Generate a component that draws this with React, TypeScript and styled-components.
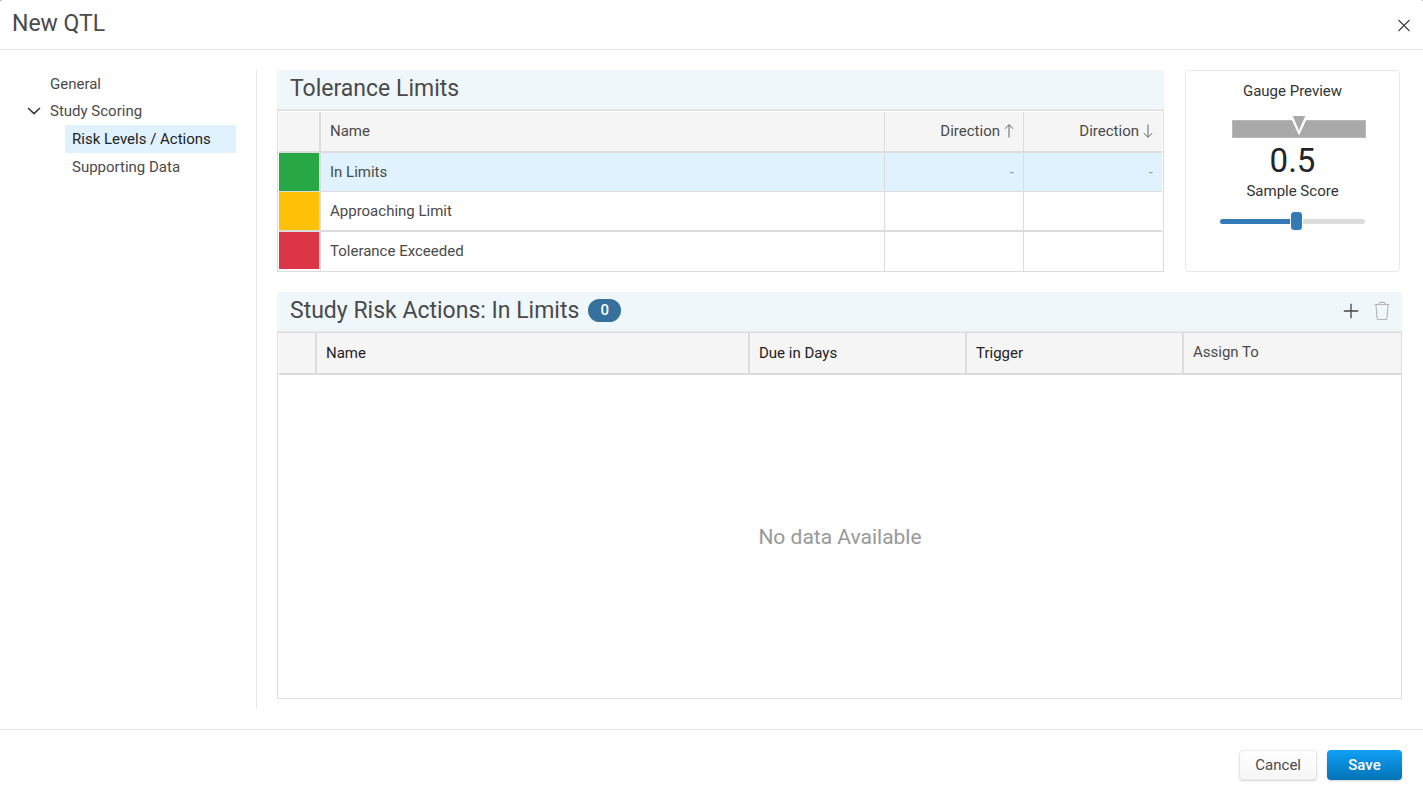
import React, { useState } from "react";
import styled, { createGlobalStyle, css } from "styled-components";

const line = "#dcdcdc";
const softLine = "#e9e9e9";

const GlobalStyle = createGlobalStyle`
  *, *::before, *::after { box-sizing: border-box; }
  body {
    margin: 0;
    background: #8a8a8a;
    color: #4a4a4a;
    font: 400 15px/20px Roboto, "Liberation Sans", sans-serif;
  }
  button, input { font: inherit; }
`;

const Dialog = styled.div`
  display: flex;
  flex-direction: column;
  min-height: 100vh;
  background: #fff;
  border-radius: 2px 2px 0 0;
`;

const DialogHeader = styled.header`
  display: flex;
  align-items: center;
  justify-content: space-between;
  height: 50px;
  padding: 0 12px;
  border-bottom: 1px solid ${softLine};
`;

const DialogTitle = styled.h1`
  margin: 0;
  padding-bottom: 2px;
  font-size: 23px;
  line-height: 28px;
  font-weight: 400;
`;

const IconButton = styled.button`
  display: inline-flex;
  padding: 0;
  border: 0;
  background: none;
  color: #444;
  cursor: pointer;

  &:disabled {
    color: #b5b5b5;
    cursor: default;
  }
`;

const DialogBody = styled.div`
  display: flex;
  flex: 1;
`;

const Sidebar = styled.nav`
  flex: 0 0 257px;
  margin: 20px 0;
  padding-right: 20px;
  border-right: 1px solid ${softLine};
`;

const Tree = styled.ul`
  margin: 0;
  padding: 0;
  list-style: none;

  & & {
    padding-top: 1px;
  }
`;

const TreeLink = styled.a<{ $nested?: boolean; $active?: boolean }>`
  display: flex;
  align-items: center;
  height: ${(p) => (p.$active ? 28 : 27)}px;
  margin-left: ${(p) => (p.$nested ? 65 : 27)}px;
  padding-left: ${(p) => (p.$nested ? 7 : 0)}px;
  color: ${(p) => (p.$active ? "#222" : "#4a4a4a")};
  background: ${(p) => (p.$active ? "#dff2fe" : "transparent")};
  text-decoration: none;
`;

const TreeToggle = styled.span`
  display: inline-flex;
  width: 23px;
`;

const Main = styled.main`
  display: flex;
  flex: 1;
  flex-direction: column;
  gap: 20px;
  min-width: 0;
  padding: 20px 21px 30px 20px;
`;

const TopRow = styled.div`
  display: flex;
  gap: 21px;
  padding-right: 2px;
`;

const Panel = styled.section`
  display: flex;
  flex: 1;
  flex-direction: column;
  min-width: 0;
`;

const PanelHeader = styled.div`
  display: flex;
  align-items: center;
  height: 40px;
  padding: 0 12px 2px 13px;
  background: #eff7fb;
  border-bottom: 1px solid ${softLine};
  border-radius: 4px 4px 0 0;
`;

const PanelTitle = styled.h2`
  margin: 0;
  font-size: 23px;
  line-height: 28px;
  font-weight: 400;
`;

const Badge = styled.span`
  width: 33px;
  margin-left: 9px;
  border-radius: 12px;
  background: #36709c;
  color: #fff;
  font-weight: 500;
  line-height: 23px;
  text-align: center;
`;

const Actions = styled.div`
  display: flex;
  align-items: center;
  gap: 15px;
  margin-left: auto;
`;

const TableFrame = styled.div<{ $flush?: boolean }>`
  display: flex;
  flex: 1;
  flex-direction: column;
  padding: ${(p) => (p.$flush ? "0 0 0 1px" : "1px 1px 0")};
  border: 1px solid ${line};
`;

const Table = styled.table`
  width: 100%;
  table-layout: fixed;
  border-collapse: separate;
  border-spacing: 0;
`;

const Col = styled.col<{ $width?: string }>`
  width: ${(p) => p.$width ?? "auto"};
`;

const cell = css<{ $divider?: number; $right?: boolean }>`
  padding: 0 9px;
  border-right: ${(p) => p.$divider ?? 0}px solid ${line};
  text-align: ${(p) => (p.$right ? "right" : "left")};
  font-weight: 400;
  white-space: nowrap;
`;

const HeadCell = styled.th<{ $divider?: number; $right?: boolean; $dark?: boolean }>`
  ${cell}
  height: 41px;
  padding-bottom: ${(p) => (p.$dark ? 0 : 2)}px;
  border-bottom: 2px solid ${line};
  background: #f5f5f5;
  color: ${(p) => (p.$dark ? "#222" : "#4a4a4a")};
`;

const TallHeadCell = styled(HeadCell)`
  height: 42px;
`;

const Cell = styled.td<{ $divider?: number; $right?: boolean }>`
  ${cell}
`;

const SwatchCell = styled(Cell)<{ $color: string }>`
  background: ${(p) => p.$color};
`;

const BodyRow = styled.tr<{ $selected?: boolean }>`
  height: 39px;
  background: ${(p) => (p.$selected ? "#dff2fe" : "#fff")};

  ${Cell} {
    border-bottom: 1px solid ${line};
  }
  &:nth-child(2) {
    height: 40px;
  }
  &:nth-child(2) ${Cell} {
    border-bottom-width: 2px;
  }
  &:last-child ${Cell} {
    padding-bottom: 2px;
    border-bottom: 0;
  }
  &:last-child ${SwatchCell} {
    border-bottom: 2px solid #fff;
  }
`;

const Muted = styled.span`
  color: #999;
`;

const DirectionLabel = styled.span`
  display: inline-flex;
  align-items: center;
  gap: 4px;
`;

const EmptyState = styled.div`
  display: flex;
  flex: 1;
  align-items: center;
  justify-content: center;
  color: #999;
  font-size: 21px;
  line-height: 28px;
`;

const GaugeCard = styled.aside`
  display: flex;
  flex: 0 0 215px;
  flex-direction: column;
  align-items: center;
  padding: 10px 0;
  border: 1px solid ${softLine};
  border-radius: 4px;
  color: #333;
`;

const GaugeDrawing = styled.svg`
  display: block;
  margin: 14px 0 2px 13px;
`;

const Score = styled.output`
  color: #212529;
  font-size: 33px;
  line-height: 40px;
`;

const Slider = styled.input<{ $percent: number }>`
  width: 145px;
  height: 20px;
  margin: 10px 0 0;
  appearance: none;
  background: transparent;

  &::-webkit-slider-runnable-track {
    height: 5px;
    border-radius: 3px;
    background: linear-gradient(
      to right,
      #337ab7 ${(p) => p.$percent}%,
      #dcdcdc ${(p) => p.$percent}%
    );
  }
  &::-webkit-slider-thumb {
    appearance: none;
    width: 13px;
    height: 20px;
    margin-top: -8px;
    border: 1px solid #fff;
    border-radius: 4px;
    background: #337ab7;
  }
`;

const DialogFooter = styled.footer`
  display: flex;
  justify-content: flex-end;
  gap: 10px;
  height: 69px;
  padding: 20px 21px 0;
  border-top: 1px solid ${softLine};
`;

const Button = styled.button<{ $primary?: boolean }>`
  min-width: 75px;
  height: 30px;
  padding: 0 15px;
  border: ${(p) => (p.$primary ? "0" : `1px solid ${softLine}`)};
  border-radius: 4px;
  background: ${(p) =>
    p.$primary
      ? "linear-gradient(#11a0f8, #0272b4)"
      : "linear-gradient(#fff, #f6f6f6)"};
  box-shadow: 0 1px 2px rgba(0, 0, 0, 0.18);
  color: ${(p) => (p.$primary ? "#fff" : "#4a4a4a")};
  font-weight: ${(p) => (p.$primary ? 500 : 400)};
  cursor: pointer;
`;

const limits = [
  { name: "In Limits", color: "#28a745", value: "-" },
  { name: "Approaching Limit", color: "#ffc107", value: "" },
  { name: "Tolerance Exceeded", color: "#dc3545", value: "" },
];

const CloseIcon = () => (
  <svg width="14" height="14" viewBox="0 0 14 14" fill="none" stroke="currentColor" strokeWidth="1.2">
    <path d="M1.5 2l11 11M12.5 2l-11 11" />
  </svg>
);

const ChevronIcon = () => (
  <svg width="14" height="10" viewBox="0 0 14 10" fill="none" stroke="#333" strokeWidth="1.5">
    <path d="M1 2l6 5.6L13 2" />
  </svg>
);

const ArrowIcon = ({ down }: { down?: boolean }) => (
  <svg width="10" height="14" viewBox="0 0 10 14" fill="none" stroke="#666" strokeWidth="1">
    <path d={down ? "M5 .5v12.7M.8 9.2l4.2 4 4.2-4" : "M5 13.5V.8M.8 4.8l4.2-4 4.2 4"} />
  </svg>
);

const PlusIcon = () => (
  <svg width="16" height="16" viewBox="0 0 16 16" fill="none" stroke="currentColor" strokeWidth="1.3">
    <path d="M8 .8v14.4M.8 8h14.4" />
  </svg>
);

const TrashIcon = () => (
  <svg width="16" height="20" viewBox="0 0 16 20" fill="none" stroke="currentColor" strokeWidth="1.1">
    <path d="M.5 3.5h15M4.8 3.3C5 1.9 5.8 1.4 6.8 1.4h2.4c1 0 1.8.5 2 1.9M2 3.7l1 13.4c.1 1 .6 1.4 1.4 1.4h7.2c.8 0 1.3-.4 1.4-1.4l1-13.4" />
  </svg>
);

const Gauge = () => (
  <GaugeDrawing width="134" height="24" viewBox="0 0 134 24" role="img" aria-label="Gauge">
    <rect x="0.5" y="5.5" width="133" height="17" fill="#a9a9a9" stroke="#b8b8b8" />
    <path d="M58 1h18L67 20.5z" fill="#fff" />
    <path d="M60.8 1h12.4L67 15.5z" fill="#a9a9a9" />
  </GaugeDrawing>
);

export default function App() {
  const [score, setScore] = useState(0.53);

  return (
    <>
      <GlobalStyle />
      <Dialog role="dialog" aria-labelledby="dialog-title">
        <DialogHeader>
          <DialogTitle id="dialog-title">New QTL</DialogTitle>
          <IconButton type="button" aria-label="Close">
            <CloseIcon />
          </IconButton>
        </DialogHeader>

        <DialogBody>
          <Sidebar aria-label="Sections">
            <Tree>
              <li>
                <TreeLink href="#general">
                  <TreeToggle />
                  General
                </TreeLink>
              </li>
              <li>
                <TreeLink href="#scoring">
                  <TreeToggle>
                    <ChevronIcon />
                  </TreeToggle>
                  Study Scoring
                </TreeLink>
                <Tree>
                  <li>
                    <TreeLink href="#levels" $nested $active aria-current="page">
                      Risk Levels / Actions
                    </TreeLink>
                  </li>
                  <li>
                    <TreeLink href="#supporting" $nested>
                      Supporting Data
                    </TreeLink>
                  </li>
                </Tree>
              </li>
            </Tree>
          </Sidebar>

          <Main>
            <TopRow>
              <Panel>
                <PanelHeader>
                  <PanelTitle>Tolerance Limits</PanelTitle>
                </PanelHeader>
                <TableFrame>
                  <Table>
                    <colgroup>
                      <Col $width="42px" />
                      <Col />
                      <Col $width="139px" />
                      <Col $width="138px" />
                    </colgroup>
                    <thead>
                      <tr>
                        <HeadCell $divider={2} aria-label="Color" />
                        <HeadCell $divider={1}>Name</HeadCell>
                        <HeadCell $divider={1} $right>
                          <DirectionLabel>
                            Direction <ArrowIcon />
                          </DirectionLabel>
                        </HeadCell>
                        <HeadCell $right>
                          <DirectionLabel>
                            Direction <ArrowIcon down />
                          </DirectionLabel>
                        </HeadCell>
                      </tr>
                    </thead>
                    <tbody>
                      {limits.map((limit, i) => (
                        <BodyRow key={limit.name} $selected={i === 0}>
                          <SwatchCell $divider={2} $color={limit.color} />
                          <Cell $divider={1}>{limit.name}</Cell>
                          <Cell $divider={1} $right>
                            <Muted>{limit.value}</Muted>
                          </Cell>
                          <Cell $right>
                            <Muted>{limit.value}</Muted>
                          </Cell>
                        </BodyRow>
                      ))}
                    </tbody>
                  </Table>
                </TableFrame>
              </Panel>

              <GaugeCard>
                <span>Gauge Preview</span>
                <Gauge />
                <Score>{score.toFixed(1)}</Score>
                <label htmlFor="sample-score">Sample Score</label>
                <Slider
                  id="sample-score"
                  type="range"
                  min={0}
                  max={1}
                  step={0.01}
                  value={score}
                  $percent={score * 100}
                  onChange={(e) => setScore(Number(e.target.value))}
                />
              </GaugeCard>
            </TopRow>

            <Panel>
              <PanelHeader>
                <PanelTitle>Study Risk Actions: In Limits</PanelTitle>
                <Badge>0</Badge>
                <Actions>
                  <IconButton type="button" aria-label="Add action">
                    <PlusIcon />
                  </IconButton>
                  <IconButton type="button" aria-label="Delete action" disabled>
                    <TrashIcon />
                  </IconButton>
                </Actions>
              </PanelHeader>
              <TableFrame $flush>
                <Table>
                  <colgroup>
                    <Col $width="38px" />
                    <Col />
                    <Col $width="217px" />
                    <Col $width="217px" />
                    <Col $width="217px" />
                  </colgroup>
                  <thead>
                    <tr>
                      <TallHeadCell $divider={2} aria-label="Select" />
                      <TallHeadCell $divider={2} $dark>Name</TallHeadCell>
                      <TallHeadCell $divider={2} $dark>Due in Days</TallHeadCell>
                      <TallHeadCell $divider={2} $dark>Trigger</TallHeadCell>
                      <TallHeadCell>Assign To</TallHeadCell>
                    </tr>
                  </thead>
                </Table>
                <EmptyState>No data Available</EmptyState>
              </TableFrame>
            </Panel>
          </Main>
        </DialogBody>

        <DialogFooter>
          <Button type="button">Cancel</Button>
          <Button type="button" $primary>
            Save
          </Button>
        </DialogFooter>
      </Dialog>
    </>
  );
}
